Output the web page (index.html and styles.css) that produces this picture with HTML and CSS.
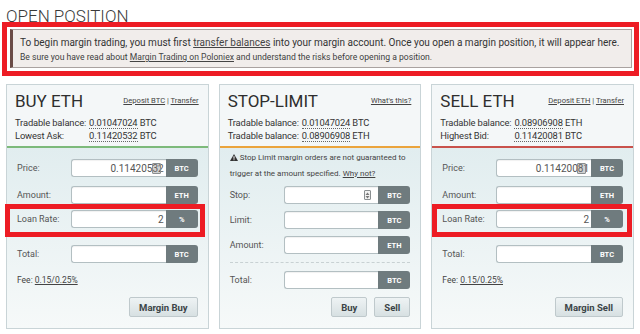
FILE: index.html
```html
<!DOCTYPE html>
<html>
<head>
<meta charset="utf-8">
<link rel="stylesheet" href="styles.css">
</head>
<body>
<div class="page">
  <h1 class="page-title">OPEN POSITION</h1>
  <div class="highlight highlight-alert">
    <div class="alert">
      <p class="alert-main">To begin margin trading, you must first <a href="#">transfer balances</a> into your margin account. Once you open a margin position, it will appear here.</p>
      <p class="alert-sub">Be sure you have read about <a href="#">Margin Trading on Poloniex</a> and understand the risks before opening a position.</p>
    </div>
  </div>

  <div class="panels">
    <section class="panel panel-buy">
      <header class="panel-head">
        <div class="head-top">
          <h2 class="panel-title">BUY ETH</h2>
          <div class="head-links"><a href="#">Deposit BTC</a> | <a href="#">Transfer</a></div>
        </div>
        <div class="info">
          <span class="info-label">Tradable balance:</span><span><span class="val">0.01047024</span> BTC</span>
          <span class="info-label">Lowest Ask:</span><span><span class="val">0.11420532</span> BTC</span>
        </div>
      </header>
      <div class="panel-body body-trade">
        <div class="row row-first">
          <span class="row-label">Price:</span>
          <div class="group"><div class="field"><span class="field-val">0.11420532</span><span class="spin spin-big"></span></div><span class="unit">BTC</span></div>
        </div>
        <div class="row">
          <span class="row-label">Amount:</span>
          <div class="group"><div class="field"></div><span class="unit">ETH</span></div>
        </div>
        <div class="highlight highlight-row hl-left">
          <div class="row">
            <span class="row-label">Loan Rate:</span>
            <div class="group"><div class="field"><span class="field-val">2</span></div><span class="unit">%</span></div>
          </div>
        </div>
        <div class="row row-total">
          <span class="row-label">Total:</span>
          <div class="group"><div class="field"></div><span class="unit">BTC</span></div>
        </div>
        <p class="fee">Fee: <a href="#">0.15/0.25%</a></p>
        <div class="actions"><button class="btn">Margin Buy</button></div>
      </div>
    </section>

    <section class="panel panel-stop">
      <header class="panel-head">
        <div class="head-top">
          <h2 class="panel-title">STOP-LIMIT</h2>
          <div class="head-links"><a href="#">What's this?</a></div>
        </div>
        <div class="info">
          <span class="info-label">Tradable balance:</span><span><span class="val">0.01047024</span> BTC</span>
          <span class="info-label">Tradable balance:</span><span><span class="val">0.08906908</span> ETH</span>
        </div>
      </header>
      <div class="panel-body body-stop">
        <p class="warn"><svg class="warn-icon" width="8" height="7" viewBox="0 0 8 7"><path d="M4 0 L8 7 L0 7 Z" fill="#333"/><rect x="3.5" y="2.2" width="1" height="2.6" fill="#fff"/><rect x="3.5" y="5.3" width="1" height="0.9" fill="#fff"/></svg> Stop Limit margin orders are not guaranteed to trigger at the amount specified. <a href="#">Why not?</a></p>
        <div class="row row-stop">
          <span class="row-label">Stop:</span>
          <div class="group"><div class="field"><span class="spin spin-small"><svg width="5" height="7" viewBox="0 0 5 7"><path d="M2.5 0.5 L4.5 3 L0.5 3 Z M2.5 6.5 L4.5 4 L0.5 4 Z" fill="#777"/></svg></span></div><span class="unit">BTC</span></div>
        </div>
        <div class="row row-s">
          <span class="row-label">Limit:</span>
          <div class="group"><div class="field"></div><span class="unit">BTC</span></div>
        </div>
        <div class="row row-s">
          <span class="row-label">Amount:</span>
          <div class="group"><div class="field"></div><span class="unit">ETH</span></div>
        </div>
        <hr class="sep">
        <div class="row">
          <span class="row-label">Total:</span>
          <div class="group"><div class="field"></div><span class="unit">BTC</span></div>
        </div>
        <div class="actions actions-stop"><button class="btn">Buy</button><button class="btn">Sell</button></div>
      </div>
    </section>

    <section class="panel panel-sell">
      <header class="panel-head">
        <div class="head-top">
          <h2 class="panel-title">SELL ETH</h2>
          <div class="head-links"><a href="#">Deposit ETH</a> | <a href="#">Transfer</a></div>
        </div>
        <div class="info">
          <span class="info-label">Tradable balance:</span><span><span class="val">0.08906908</span> ETH</span>
          <span class="info-label">Highest Bid:</span><span><span class="val">0.11420081</span> BTC</span>
        </div>
      </header>
      <div class="panel-body body-trade">
        <div class="row row-first">
          <span class="row-label">Price:</span>
          <div class="group"><div class="field"><span class="field-val">0.11420081</span><span class="spin spin-big"></span></div><span class="unit">BTC</span></div>
        </div>
        <div class="row">
          <span class="row-label">Amount:</span>
          <div class="group"><div class="field"></div><span class="unit">ETH</span></div>
        </div>
        <div class="highlight highlight-row hl-right">
          <div class="row">
            <span class="row-label">Loan Rate:</span>
            <div class="group"><div class="field"><span class="field-val">2</span></div><span class="unit">%</span></div>
          </div>
        </div>
        <div class="row row-total">
          <span class="row-label">Total:</span>
          <div class="group"><div class="field"></div><span class="unit">BTC</span></div>
        </div>
        <p class="fee">Fee: <a href="#">0.15/0.25%</a></p>
        <div class="actions"><button class="btn">Margin Sell</button></div>
      </div>
    </section>
  </div>
</div>
</body>
</html>
```

FILE: styles.css
```css
* { box-sizing: border-box; }
html, body { margin: 0; padding: 0; background: #fff; }
body {
  font-family: Roboto, "Liberation Sans", Arial, sans-serif;
  color: #333;
  width: 640px;
  height: 334px;
  overflow: hidden;
}
p { margin: 0; }
a { color: inherit; }

.page-title {
  margin: 6px 0 -4px 6px;
  font-size: 17px;
  line-height: 20px;
  font-weight: 300;
  color: #3a3a3a;
}

.highlight {
  border: 5px solid #ed1c24;
  position: relative;
  z-index: 1;
  background: #fff;
}
.highlight-alert {
  margin: 0 1px 0 2px;
  padding: 2px 2px 3px 3px;
}
.alert {
  background: #f1edeb;
  border: 1px solid #aaa2a0;
  border-left: 3px solid #6b4c47;
  padding: 6px 8px 4px 7px;
}
.alert-main {
  font-size: 10px;
  line-height: 14px;
  color: #333;
}
.alert-sub {
  margin-top: 1px;
  font-size: 8.6px;
  line-height: 12px;
  color: #3d3d3d;
}
.alert a { color: #444; text-decoration: underline; }

.panels {
  display: grid;
  grid-template-columns: 1fr 1fr 1fr;
  column-gap: 10px;
  margin: 8px 6px 0 6px;
  height: 245px;
}
.panel {
  border: 1px solid #c9d4d7;
  display: flex;
  flex-direction: column;
  background: #fff;
  min-width: 0;
}
.panel-head {
  background: #f4f7f8;
  padding: 5px 9px 4px 8px;
  border-bottom: 2px solid #7dba7b;
}
.panel-stop .panel-head { border-bottom-color: #eba43c; }
.panel-sell .panel-head { border-bottom-color: #c9524c; }

.head-top {
  display: flex;
  justify-content: space-between;
  align-items: center;
}
.panel-title {
  margin: 0;
  font-size: 17px;
  line-height: 22px;
  font-weight: 400;
  color: #2e2e2e;
}
.head-links {
  font-size: 7.6px;
  color: #444;
  margin-top: -1px;
}
.info {
  margin-top: 4px;
  display: grid;
  grid-template-columns: max-content auto;
  column-gap: 3px;
  font-size: 9.4px;
  line-height: 13px;
  letter-spacing: -0.15px;
  color: #333;
  white-space: nowrap;
}
.val { border-bottom: 1px dotted #666; }

.panel-body {
  flex: 1;
  display: flex;
  flex-direction: column;
  background: linear-gradient(#e1edef, #f6f9f9);
  padding: 11px 10px 11px 10px;
}
.body-stop { padding-top: 2px; }

.row {
  display: flex;
  align-items: center;
  height: 18px;
}
.row-first { margin-bottom: 9px; }
.row-total { margin-top: 8px; }
.row-stop { margin-top: 4px; }
.row-s { margin-top: 7px; }

.row-label {
  width: 54px;
  flex: none;
  font-size: 9px;
  color: #555;
  white-space: nowrap;
}
.group {
  flex: 1;
  display: flex;
  height: 18px;
}
.field {
  flex: 1;
  position: relative;
  background: #fff;
  border: 1px solid #b3bfc2;
  border-right: none;
  border-radius: 3px 0 0 3px;
  box-shadow: inset 0 1px 1px rgba(0,0,0,0.06);
  display: flex;
  align-items: center;
  justify-content: flex-end;
  padding-right: 2px;
}
.field-val {
  font-size: 10px;
  color: #555;
}
.unit {
  width: 32px;
  flex: none;
  background: #6f7b7e;
  color: #fff;
  font-size: 7.5px;
  font-weight: bold;
  display: flex;
  align-items: center;
  justify-content: center;
  border-radius: 0 3px 3px 0;
}

.spin {
  position: absolute;
  border: 1px solid #8a8f91;
  border-radius: 1px;
  display: flex;
  align-items: center;
  justify-content: center;
}
.spin-big {
  right: 5px;
  top: 3px;
  width: 9px;
  height: 11px;
  background: rgba(120,120,120,0.35);
}
.spin-small {
  right: 7px;
  top: 3px;
  width: 7px;
  height: 10px;
  background: #f2f2f2;
}

.highlight-row {
  padding-top: 1px;
  padding-bottom: 4px;
  background: transparent;
}
.hl-left { margin: 0 -7px 0 -12px; padding-left: 7px; padding-right: 2px; }
.hl-right { margin: 0 -9px 0 -10px; padding-left: 5px; padding-right: 4px; }

.fee {
  margin-top: 11px;
  font-size: 8.5px;
  line-height: 12px;
  color: #444;
}

.warn {
  font-size: 8px;
  line-height: 16px;
  color: #444;
}
.warn-icon { vertical-align: -0.5px; }

.sep {
  margin: 8px 0;
  border: none;
  border-top: 1px dashed #c8d1d3;
  height: 0;
}

.actions {
  margin-top: auto;
  display: flex;
  justify-content: flex-end;
  gap: 7px;
}
.btn {
  height: 20px;
  padding: 0 9px;
  font-family: Roboto, "Liberation Sans", Arial, sans-serif;
  font-size: 9.5px;
  font-weight: bold;
  color: #3b4447;
  background: linear-gradient(#eef3f4, #d7e0e2);
  border: 1px solid #bfc9cc;
  border-radius: 2px;
}
```
